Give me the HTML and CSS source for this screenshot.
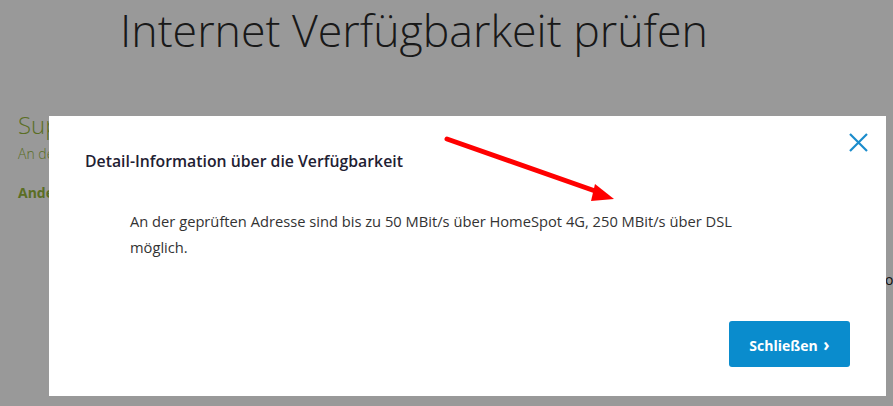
FILE: index.html
```html
<!DOCTYPE html>
<html lang="de">
<head>
<meta charset="utf-8">
<title>Internet Verfügbarkeit prüfen</title>
<link rel="stylesheet" href="styles.css">
</head>
<body>
<main class="page">
  <h1 class="page-title">Internet Verfügbarkeit prüfen</h1>
  <section class="result">
    <h2 class="result-title">Super! Verfügbarkeit für die Adresse „Musterweg 8, 10, 20146 Hamburg“ wurde geprüft</h2>
    <p class="result-text">An der geprüften Adresse ist Internet verfügbar.</p>
    <p class="result-alt">Andere Adresse prüfen</p>
    <p class="result-side">o</p>
  </section>
</main>

<div class="overlay"></div>

<div class="modal" role="dialog" aria-labelledby="modal-title">
  <div class="modal-head">
    <h3 class="modal-title" id="modal-title">Detail-Information über die Verfügbarkeit</h3>
    <button class="modal-close" aria-label="Schließen">
      <svg width="19" height="19" viewBox="0 0 19 19"><path d="M1 1 L18 18 M18 1 L1 18" stroke="#1a8ccc" stroke-width="2.2" fill="none"/></svg>
    </button>
  </div>
  <p class="modal-text">An der geprüften Adresse sind bis zu 50 MBit/s über HomeSpot 4G, 250 MBit/s über DSL möglich.</p>
  <div class="modal-foot">
    <button class="btn-primary">Schließen <span class="chev">›</span></button>
  </div>
</div>

<svg class="annotation" width="893" height="406" viewBox="0 0 893 406">
  <line x1="447" y1="139" x2="598" y2="192" stroke="#ff0000" stroke-width="5" stroke-linecap="round"/>
  <polygon points="595,184 591,201 614,199" fill="#ff0000"/>
</svg>
</body>
</html>
```

FILE: styles.css
```css
html, body {
  margin: 0;
  padding: 0;
}
body {
  width: 893px;
  height: 406px;
  overflow: hidden;
  background: #ffffff;
  font-family: "Open Sans", "Noto Sans", sans-serif;
  position: relative;
}
.page {
  padding: 0 0 0 18px;
}
.page-title {
  margin: 0;
  padding: 2px 0 0 102px;
  font-weight: 300;
  font-size: 44.7px;
  line-height: 56px;
  color: #2a2a2a;
}
.result {
  padding-top: 52px;
  width: 875px;
}
.result-title {
  margin: 0;
  max-width: 862px;
  font-weight: 300;
  font-size: 24px;
  line-height: 30px;
  color: #98b83c;
  white-space: nowrap;
  overflow: hidden;
}
.result-text {
  margin: 4px 0 0;
  font-size: 14px;
  font-weight: 300;
  color: #98b83c;
}
.result-alt {
  margin: 20px 0 0;
  font-size: 14px;
  font-weight: 700;
  color: #98b83c;
}
.result-side {
  margin: 68px 0 0 867px;
  font-size: 14px;
  color: #222;
}
.overlay {
  position: absolute;
  inset: 0;
  background: rgba(0, 0, 0, 0.4);
}
.modal {
  position: absolute;
  left: 49px;
  top: 116px;
  width: 837px;
  height: 280px;
  box-sizing: border-box;
  background: #ffffff;
  padding: 17px 18px 29px 36px;
  display: flex;
  flex-direction: column;
}
.modal-head {
  display: flex;
  justify-content: space-between;
  align-items: flex-start;
}
.modal-title {
  margin: 16px 0 0;
  font-size: 15.8px;
  font-weight: 600;
  line-height: 24px;
  color: #1f2133;
}
.modal-close {
  border: 0;
  background: none;
  padding: 0;
  width: 19px;
  height: 19px;
  cursor: pointer;
}
.modal-close svg {
  display: block;
}
.modal-text {
  margin: 35px 0 0 45px;
  max-width: 640px;
  font-size: 14.7px;
  font-weight: 400;
  line-height: 26px;
  color: #333333;
}
.modal-foot {
  margin-top: auto;
  display: flex;
  justify-content: flex-end;
  padding-right: 18px;
}
.btn-primary {
  width: 121px;
  height: 46px;
  border: 0;
  border-radius: 3px;
  background: #0a8ccd;
  color: #ffffff;
  font-family: "Open Sans", "Noto Sans", sans-serif;
  font-weight: 700;
  font-size: 14px;
  cursor: pointer;
}
.chev {
  font-size: 17px;
  font-weight: 700;
  margin-left: 2px;
}
.annotation {
  position: absolute;
  left: 0;
  top: 0;
  pointer-events: none;
}
```
